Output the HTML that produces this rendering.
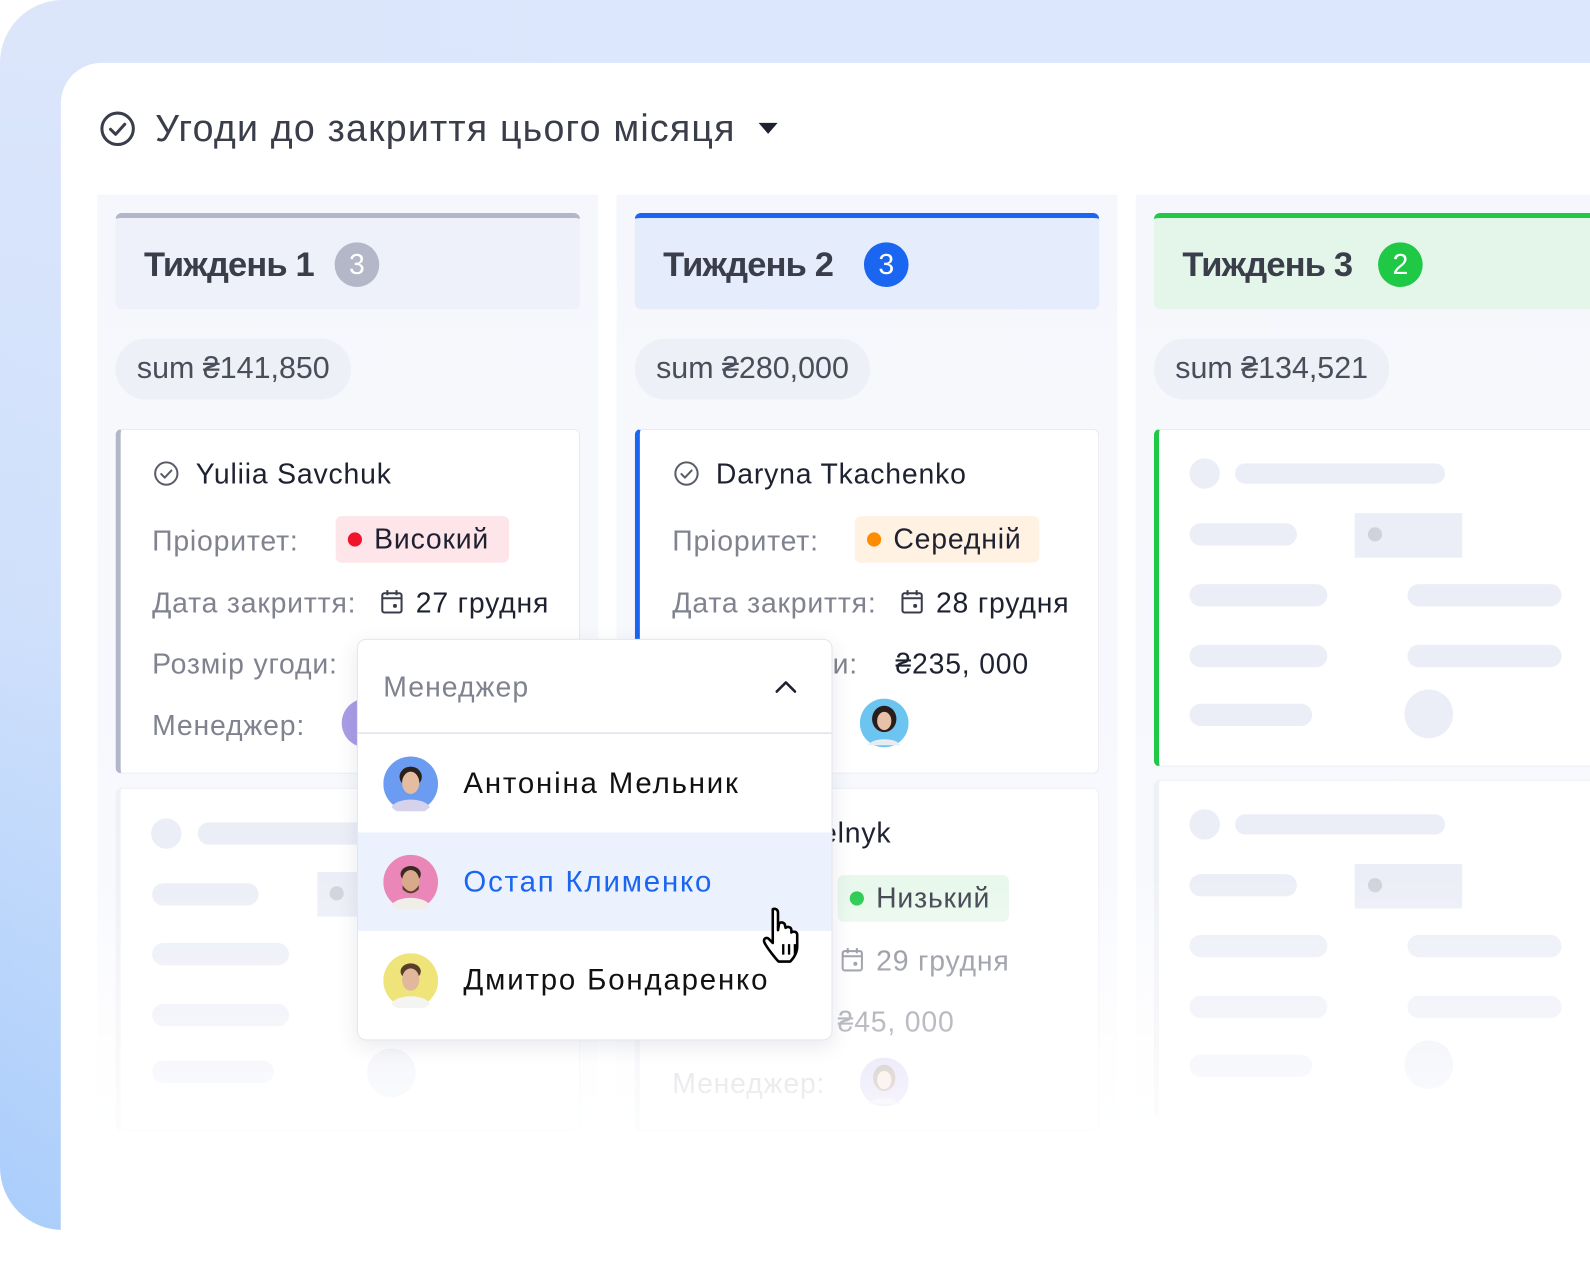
<!DOCTYPE html>
<html><head><meta charset="utf-8">
<style>
*{margin:0;padding:0;box-sizing:border-box}
html,body{width:1590px;height:1230px;overflow:hidden;background:#fff}
body{font-family:"Liberation Sans",sans-serif}
#w{position:absolute;left:0;top:0;width:1568px;height:1213px;transform:scale(1.01403);transform-origin:0 0}
.a{position:absolute}
.outer{left:0;top:0;width:1640px;height:1213px;border-radius:62px 0 0 62px;background:linear-gradient(180deg,#dce6fb 0%,#cfe0fb 50%,#a9cdfb 100%)}
.outer2{left:0;top:0;width:1640px;height:1213px;border-radius:62px 0 0 62px;background:linear-gradient(90deg,rgba(255,255,255,0) 0%,rgba(220,230,252,.6) 40%,rgba(220,230,252,.8) 100%)}
.panel{left:60px;top:62px;width:1600px;height:1200px;background:#fff;border-radius:40px 0 0 0}
.col{top:192px;width:494px;height:960px;background:linear-gradient(180deg,#f5f7fc 0%,#f7f9fd 70%,#fff 100%)}
.hdr{top:210px;width:458px;height:95px;border-radius:6px;border-top:5px solid}
.ht{font-size:34px;font-weight:bold;color:#3a3d4a;letter-spacing:-.8px;top:242px}
.bd{top:239px;width:44px;height:44px;border-radius:50%;color:#fff;font-size:28px;text-align:center;line-height:44px}
.sum{top:334px;height:60px;border-radius:30px;background:#edf0f7;font-size:30px;color:#4a4d5a;line-height:60px;padding:0 21px}
.card{background:#fff;border:1.5px solid #e8eaf1;border-left:5px solid;border-radius:6px}
.t{font-size:28px;white-space:nowrap;letter-spacing:.8px}
.lb{color:#80838f}
.dk{color:#1e2130}
.pill{height:46px;border-radius:6px;font-size:28px;line-height:46px;padding-left:38px;color:#1e2130;letter-spacing:.8px}
.dot{position:absolute;left:12px;top:16px;width:14px;height:14px;border-radius:50%}
.sk{background:#eceef7;border-radius:11px;height:22px}
.skc{background:#eceef7;border-radius:50%}
.nm{letter-spacing:1.8px;font-size:29px}
.clip{width:150px;overflow:hidden}
</style></head><body><div id="w">
<div class="a outer"></div><div class="a outer2"></div>
<div class="a panel"></div>

<svg class="a" style="left:98px;top:109px" width="36" height="36" viewBox="0 0 36 36"><circle cx="18" cy="18" r="15.5" fill="none" stroke="#3a3d4a" stroke-width="3"/><path d="M11 18.5l5 5 9-10" fill="none" stroke="#3a3d4a" stroke-width="3" stroke-linecap="round" stroke-linejoin="round"/></svg>
<div class="a" style="left:153px;top:106px;font-size:37px;color:#3a3d4a;letter-spacing:1.2px">Угоди до закриття цього місяця</div>
<svg class="a" style="left:748px;top:121px" width="20" height="12"><path d="M0 0h19l-9.5 11z" fill="#1e2130"/></svg>

<div class="a col" style="left:96px"></div>
<div class="a col" style="left:608px"></div>
<div class="a col" style="left:1120px;width:500px"></div>

<div class="a hdr" style="left:114px;background:#eef1f9;border-color:#b2b6c9"></div>
<div class="a ht" style="left:142px">Тиждень 1</div>
<div class="a bd" style="left:330px;background:#b3b7c8">3</div>
<div class="a hdr" style="left:626px;background:#e5ecfc;border-color:#1a66f0"></div>
<div class="a ht" style="left:654px">Тиждень 2</div>
<div class="a bd" style="left:852px;background:#1a66f0">3</div>
<div class="a hdr" style="left:1138px;width:500px;background:#e4f5ea;border-color:#1fc845"></div>
<div class="a ht" style="left:1166px">Тиждень 3</div>
<div class="a bd" style="left:1359px;background:#1fc845">2</div>

<div class="a sum" style="left:114px">sum ₴141,850</div>
<div class="a sum" style="left:626px">sum ₴280,000</div>
<div class="a sum" style="left:1138px">sum ₴134,521</div>

<!-- card 1 -->
<div class="a card" style="left:114px;top:423px;width:458px;height:340px;border-left-color:#b2b6c9"></div>
<svg class="a" style="left:151px;top:454px" width="26" height="26" viewBox="0 0 26 26"><circle cx="13" cy="13" r="11" fill="none" stroke="#5a5d68" stroke-width="2"/><path d="M8 13.5l3.5 3.5 6.5-7" fill="none" stroke="#5a5d68" stroke-width="2" stroke-linecap="round" stroke-linejoin="round"/></svg>
<div class="a t dk" style="left:193px;top:452px">Yuliia Savchuk</div>
<div class="a t lb" style="left:150px;top:518px">Пріоритет:</div>
<div class="a pill" style="left:331px;top:509px;width:171px;background:#fde5ea"><span class="dot" style="background:#f0142d"></span>Високий</div>
<div class="a t lb" style="left:150px;top:579px">Дата закриття:</div>
<svg class="a" style="left:375px;top:581px" width="24" height="26" viewBox="0 0 24 26"><rect x="2" y="4" width="19" height="19" rx="2" fill="none" stroke="#3a3d4a" stroke-width="2"/><path d="M2 9h19M7 1v5M16 1v5" stroke="#3a3d4a" stroke-width="2"/><circle cx="14.5" cy="16.5" r="2" fill="#3a3d4a"/></svg>
<div class="a t dk" style="left:410px;top:579px">27 грудня</div>
<div class="a t lb" style="left:150px;top:639px">Розмір угоди:</div>
<div class="a t lb" style="left:150px;top:700px">Менеджер:</div>
<div class="a skc" style="left:337px;top:689px;width:48px;height:48px;background:#a99de6"></div>

<!-- card 1b skeleton -->
<div class="a card" style="left:114px;top:777px;width:458px;height:338px;border-left-color:#eef0f6;border-color:#f0f1f6"></div>
<div class="a skc" style="left:149px;top:807px;width:30px;height:30px"></div>
<div class="a sk" style="left:195px;top:811px;width:170px"></div>
<div class="a sk" style="left:150px;top:871px;width:105px"></div>
<div class="a" style="left:313px;top:860px;width:50px;height:44px;background:#eceef7"></div>
<div class="a skc" style="left:325px;top:874px;width:14px;height:14px;background:#cfd2dc"></div>
<div class="a sk" style="left:150px;top:930px;width:135px"></div>
<div class="a sk" style="left:150px;top:990px;width:135px"></div>
<div class="a sk" style="left:150px;top:1046px;width:120px"></div>
<div class="a skc" style="left:362px;top:1034px;width:48px;height:48px"></div>

<!-- card 2 -->
<div class="a card" style="left:626px;top:423px;width:458px;height:340px;border-left-color:#1a66f0"></div>
<svg class="a" style="left:664px;top:454px" width="26" height="26" viewBox="0 0 26 26"><circle cx="13" cy="13" r="11" fill="none" stroke="#5a5d68" stroke-width="2"/><path d="M8 13.5l3.5 3.5 6.5-7" fill="none" stroke="#5a5d68" stroke-width="2" stroke-linecap="round" stroke-linejoin="round"/></svg>
<div class="a t dk" style="left:706px;top:452px">Daryna Tkachenko</div>
<div class="a t lb" style="left:663px;top:518px">Пріоритет:</div>
<div class="a pill" style="left:843px;top:509px;width:182px;background:#fff2e3"><span class="dot" style="background:#ff8c00"></span>Середній</div>
<div class="a t lb" style="left:663px;top:579px">Дата закриття:</div>
<svg class="a" style="left:888px;top:581px" width="24" height="26" viewBox="0 0 24 26"><rect x="2" y="4" width="19" height="19" rx="2" fill="none" stroke="#3a3d4a" stroke-width="2"/><path d="M2 9h19M7 1v5M16 1v5" stroke="#3a3d4a" stroke-width="2"/><circle cx="14.5" cy="16.5" r="2" fill="#3a3d4a"/></svg>
<div class="a t dk" style="left:923px;top:579px">28 грудня</div>
<div class="a t lb" style="left:663px;top:639px">Розмір угоди:</div>
<div class="a t dk" style="left:883px;top:639px">₴235, 000</div>
<svg class="a" style="left:848px;top:689px" width="48" height="48" viewBox="0 0 48 48"><circle cx="24" cy="24" r="24" fill="#6cc4f0"/><ellipse cx="24" cy="20" rx="12" ry="13" fill="#2a1e1a"/><ellipse cx="24" cy="22" rx="7" ry="9" fill="#e8c2a8"/><path d="M8 46c4-8 28-8 32 0z" fill="#e8ecf2"/></svg>

<!-- card 2b -->
<div class="a card" style="left:626px;top:777px;width:458px;height:338px;border-left-color:#9dbdf8;border-color:#eef0f6"></div>
<div class="a t dk" style="left:706px;top:806px">Lesia Melnyk</div>
<div class="a t lb clip" style="left:663px;top:871px">Пріоритет:</div>
<div class="a pill" style="left:826px;top:863px;width:169px;background:#e8f8ec;color:#3a3d4a"><span class="dot" style="background:#22c84a"></span>Низький</div>
<div class="a t lb clip" style="left:663px;top:932px">Дата закриття:</div>
<svg class="a" style="left:829px;top:934px" width="24" height="26" viewBox="0 0 24 26"><rect x="2" y="4" width="19" height="19" rx="2" fill="none" stroke="#80838f" stroke-width="2"/><path d="M2 9h19M7 1v5M16 1v5" stroke="#80838f" stroke-width="2"/><circle cx="14.5" cy="16.5" r="2" fill="#80838f"/></svg>
<div class="a t lb" style="left:864px;top:932px">29 грудня</div>
<div class="a t lb clip" style="left:663px;top:992px">Розмір угоди:</div>
<div class="a t lb" style="left:826px;top:992px">₴45, 000</div>
<div class="a t" style="left:663px;top:1053px;color:#c4c6ce">Менеджер:</div>
<svg class="a" style="left:848px;top:1043px;opacity:.55" width="48" height="48" viewBox="0 0 48 48"><circle cx="24" cy="24" r="24" fill="#b9aee8"/><ellipse cx="24" cy="20" rx="11" ry="13" fill="#6b4a3a"/><ellipse cx="24" cy="22" rx="7" ry="9" fill="#ecc8b0"/><path d="M8 46c4-8 28-8 32 0z" fill="#d8d4ec"/></svg>

<!-- column 3 skeletons -->
<div class="a card" style="left:1138px;top:423px;width:500px;height:333px;border-left-color:#1fc845"></div>
<div class="a card" style="left:1138px;top:769px;width:500px;height:334px;border-left-color:#5cd67a;border-color:#f0f1f6"></div>
<div class="a skc" style="left:1173px;top:452px;width:30px;height:30px"></div>
<div class="a sk" style="left:1218px;top:457px;width:207px;height:20px"></div>
<div class="a sk" style="left:1173px;top:516px;width:106px"></div>
<div class="a" style="left:1336px;top:506px;width:106px;height:44px;background:#eceef7"></div>
<div class="a skc" style="left:1349px;top:520px;width:14px;height:14px;background:#cfd2dc"></div>
<div class="a sk" style="left:1173px;top:576px;width:136px"></div>
<div class="a sk" style="left:1388px;top:576px;width:152px"></div>
<div class="a sk" style="left:1173px;top:636px;width:136px"></div>
<div class="a sk" style="left:1388px;top:636px;width:152px"></div>
<div class="a sk" style="left:1173px;top:694px;width:121px"></div>
<div class="a skc" style="left:1385px;top:680px;width:48px;height:48px"></div>

<div class="a skc" style="left:1173px;top:798px;width:30px;height:30px"></div>
<div class="a sk" style="left:1218px;top:803px;width:207px;height:20px"></div>
<div class="a sk" style="left:1173px;top:862px;width:106px"></div>
<div class="a" style="left:1336px;top:852px;width:106px;height:44px;background:#eceef7"></div>
<div class="a skc" style="left:1349px;top:866px;width:14px;height:14px;background:#cfd2dc"></div>
<div class="a sk" style="left:1173px;top:922px;width:136px"></div>
<div class="a sk" style="left:1388px;top:922px;width:152px"></div>
<div class="a sk" style="left:1173px;top:982px;width:136px"></div>
<div class="a sk" style="left:1388px;top:982px;width:152px"></div>
<div class="a sk" style="left:1173px;top:1040px;width:121px"></div>
<div class="a skc" style="left:1385px;top:1026px;width:48px;height:48px"></div>

<!-- bottom fade -->
<div class="a" style="left:60px;top:860px;width:1540px;height:360px;background:linear-gradient(180deg,rgba(255,255,255,0) 0%,rgba(255,255,255,.5) 45%,rgba(255,255,255,.95) 80%,#fff 100%)"></div>

<!-- dropdown -->
<div class="a" style="left:352px;top:630px;width:469px;height:396px;background:#fff;border:1.5px solid #e4e6ee;border-radius:9px;box-shadow:0 6px 20px rgba(40,50,90,.10);overflow:hidden">
  <div class="a t" style="left:25px;top:31px;color:#80838f;letter-spacing:1px">Менеджер</div>
  <svg class="a" style="left:411px;top:39px" width="22" height="14"><path d="M2 12l9-9 9 9" fill="none" stroke="#1e2130" stroke-width="2.5" stroke-linecap="round" stroke-linejoin="round"/></svg>
  <div class="a" style="left:0;top:91px;width:469px;height:1.5px;background:#e6e8ef"></div>
  <div class="a" style="left:0;top:190px;width:469px;height:97px;background:#ebf1fd"></div>
  <svg class="a" style="left:25px;top:115px" width="54" height="54" viewBox="0 0 54 54"><circle cx="27" cy="27" r="27" fill="#6c9cf2"/><ellipse cx="27" cy="20" rx="11" ry="10" fill="#2a201c"/><ellipse cx="27" cy="26" rx="8.5" ry="11" fill="#e3bca2"/><path d="M8 50c5-10 33-10 38 0a27 27 0 0 1-38 0z" fill="#d6d2ec"/></svg>
  <div class="a t nm" style="left:104px;top:126px;color:#111">Антоніна Мельник</div>
  <svg class="a" style="left:25px;top:212px" width="54" height="54" viewBox="0 0 54 54"><circle cx="27" cy="27" r="27" fill="#ea86b8"/><ellipse cx="27" cy="19" rx="10" ry="8" fill="#3a2a22"/><ellipse cx="27" cy="26" rx="8.5" ry="11" fill="#d9a98c"/><path d="M19 30q8 12 16 0v4q-8 8-16 0z" fill="#5a3e30"/><path d="M8 50c5-10 33-10 38 0a27 27 0 0 1-38 0z" fill="#f0eee8"/></svg>
  <div class="a t nm" style="left:104px;top:223px;color:#1a66f0">Остап Клименко</div>
  <svg class="a" style="left:25px;top:309px" width="54" height="54" viewBox="0 0 54 54"><circle cx="27" cy="27" r="27" fill="#eee47a"/><ellipse cx="27" cy="18" rx="10" ry="8" fill="#5a3e2c"/><ellipse cx="27" cy="26" rx="8.5" ry="11" fill="#e2b89c"/><path d="M8 50c5-10 33-10 38 0a27 27 0 0 1-38 0z" fill="#f4f4f2"/></svg>
  <div class="a t nm" style="left:104px;top:320px;color:#111">Дмитро Бондаренко</div>
</div>

<!-- hand cursor -->
<svg class="a" style="left:748px;top:892px" width="58" height="62" viewBox="0 0 50 54"><path d="M12 4c2.5-1 4.5.5 4.5 3v15l1-6c2.5-1.5 5 0 5 2l.5 2c2-1.5 5-.5 5 2v2c2-1.5 5-.5 5 2v10c0 6-3 10-6 13H17c-3-3-10-12-12-16-1.5-3 .5-5 3-4l4 4V7c0-1.5 0-2.5 0-3z" fill="#fff" stroke="#000" stroke-width="2.2" stroke-linejoin="round"/><path d="M21 34v9M26 34v9M31 34v9" stroke="#000" stroke-width="2"/></svg>
</div></body></html>
